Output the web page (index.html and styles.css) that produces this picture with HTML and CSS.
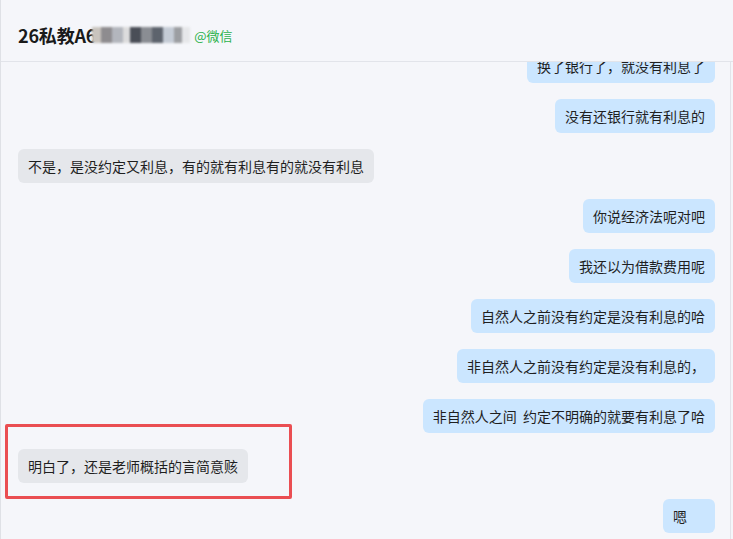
FILE: index.html
```html
<!DOCTYPE html>
<html lang="zh">
<head>
<meta charset="utf-8">
<link rel="stylesheet" href="styles.css">
</head>
<body>
<div class="app">
  <header class="header">
    <span class="title">26私教A6</span><span class="mosaic"><i class="m1"></i><i class="m2"></i><i class="m3"></i><i class="m4"></i><i class="m5"></i><i class="m6"></i><i class="m7"></i><i class="m8"></i><i class="m9"></i><i class="m10"></i></span><span class="source">@微信</span>
  </header>
  <main class="chat">
    <div class="list">
      <div class="msg right"><div class="bubble">换了银行了，就没有利息了</div></div>
      <div class="msg right"><div class="bubble">没有还银行就有利息的</div></div>
      <div class="msg left"><div class="bubble">不是，是没约定又利息，有的就有利息有的就没有利息</div></div>
      <div class="msg right"><div class="bubble">你说经济法呢对吧</div></div>
      <div class="msg right"><div class="bubble">我还以为借款费用呢</div></div>
      <div class="msg right"><div class="bubble">自然人之前没有约定是没有利息的哈</div></div>
      <div class="msg right"><div class="bubble">非自然人之前没有约定是没有利息的，</div></div>
      <div class="msg right"><div class="bubble">非自然人之间&nbsp;&nbsp;约定不明确的就要有利息了哈</div></div>
      <div class="msg left highlighted"><div class="bubble">明白了，还是老师概括的言简意赅</div></div>
      <div class="msg right"><div class="bubble short">嗯</div></div>
    </div>
  </main>
</div>
</body>
</html>
```

FILE: styles.css
```css
*, *::before, *::after { box-sizing: border-box; }
html, body {
  margin: 0;
  padding: 0;
  background: #f5f6fa;
}
body {
  font-family: "Microsoft YaHei", "Noto Sans CJK SC", "Noto Sans", sans-serif;
  color: #1f1f1f;
  width: 733px;
  height: 539px;
  overflow: hidden;
}
.app {
  width: 733px;
  height: 539px;
  border-left: 1px solid #dfe1e6;
  display: flex;
  flex-direction: column;
}
.header {
  height: 62px;
  flex: none;
  border-bottom: 1px solid #e2e4ea;
  display: flex;
  align-items: center;
  padding-left: 17px;
  padding-top: 9px;
  background: #f5f6fa;
}
.title {
  font-size: 18px;
  font-weight: 700;
  color: #1a1a1a;
  letter-spacing: -0.2px;
}
.mosaic {
  display: inline-flex;
  height: 16px;
  margin-left: -4px;
  margin-right: 4px;
  filter: blur(1.2px);
}
.mosaic i { display: block; width: 11px; height: 16px; }
.mosaic .m1 { background: #c9c4be; width: 9px; }
.mosaic .m2 { background: #8e8c8f; }
.mosaic .m3 { background: #b3b6bd; }
.mosaic .m4 { background: #dcdcdd; width: 7px; }
.mosaic .m5 { background: #4a4e57; }
.mosaic .m6 { background: #8a8d93; }
.mosaic .m7 { background: #5d636d; }
.mosaic .m8 { background: #c5ccd6; }
.mosaic .m9 { background: #9c9ea2; width: 8px; }
.mosaic .m10 { background: #e6e7ea; width: 8px; }
.source {
  font-size: 13px;
  color: #2bb24c;
}
.chat {
  flex: 1;
  overflow: hidden;
  border-right: 1px solid #e2e4ea;
  margin-right: 2px;
  position: relative;
}
.list {
  margin-top: -13px;
  padding: 0 15px 0 17px;
  display: flex;
  flex-direction: column;
  gap: 16px;
}
.msg { display: flex; position: relative; }
.msg.right { justify-content: flex-end; }
.msg.left { justify-content: flex-start; }
.bubble {
  font-size: 14px;
  line-height: 20px;
  padding: 7px 10px;
  border-radius: 6px;
  white-space: nowrap;
}
.bubble.short { min-width: 52px; }
.right .bubble { background: #cbe6ff; }
.left .bubble { background: #e5e7eb; }
.highlighted::after {
  content: "";
  position: absolute;
  left: -13px;
  top: -25px;
  width: 287px;
  height: 75px;
  border: 3px solid #ea4e52;
  border-radius: 2px;
}
```
